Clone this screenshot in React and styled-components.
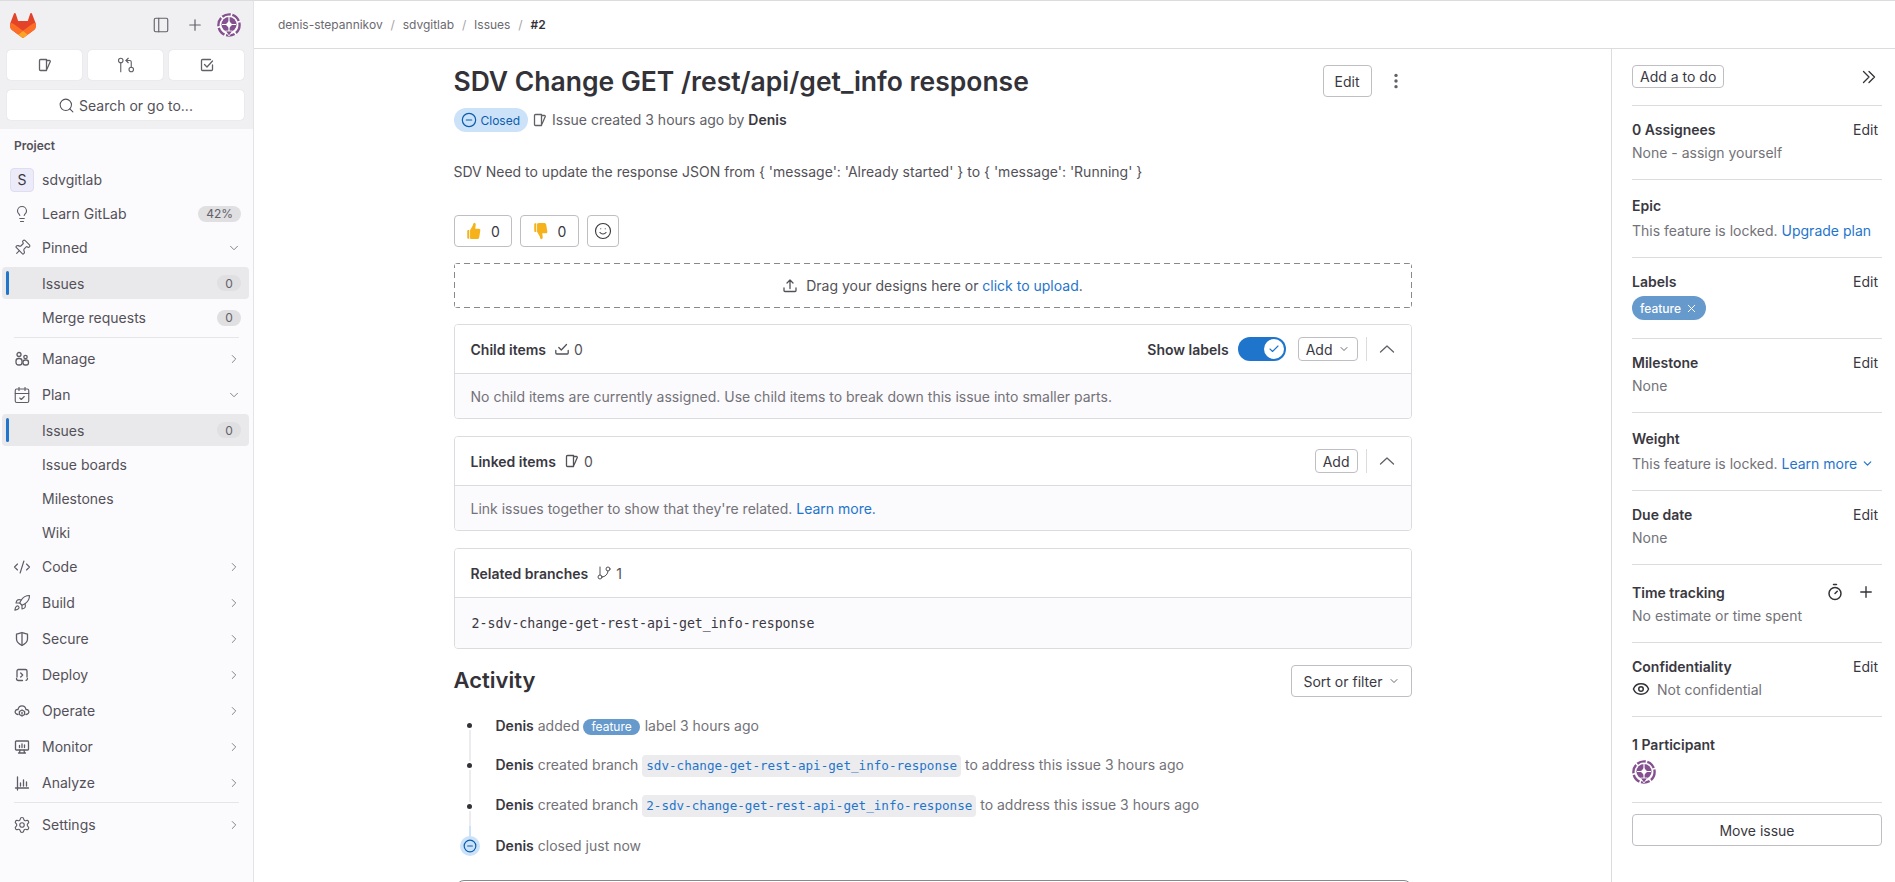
import React from "react";
import styled, { createGlobalStyle } from "styled-components";
import {
  PanelLeft, Plus, GitPullRequestArrow, Search, Lightbulb, Pin, ChevronDown, ChevronRight,
  CalendarCheck, CodeXml, Rocket, Settings, Timer, Eye, X, Smile, Check, GitBranch, CircleMinus,
} from "lucide-react";

const GlobalStyle = createGlobalStyle`
  html, body { margin: 0; padding: 0; height: 100%; overflow: hidden; background: #fff; }
  body { font-family: Inter, "Noto Sans", "Liberation Sans", sans-serif; font-size: 14px; color: #3a383f; }
  * { box-sizing: border-box; }
`;

/* hand drawn icons, 16x16 like the gitlab set */
const Svg = styled.svg.attrs((p) => ({
  viewBox: "0 0 16 16",
  fill: p.fill || "none",
  stroke: p.stroke || "currentColor",
  strokeWidth: 1.3,
  strokeLinecap: "round",
  strokeLinejoin: "round",
}))`
  width: ${(p) => p.$size || 16}px;
  height: ${(p) => p.$size || 16}px;
  flex-shrink: 0;
`;

const IssueIcon = ({ size }) => (
  <Svg $size={size}>
    <path d="M3.5 2.5h6v11h-6a1 1 0 0 1-1-1v-9a1 1 0 0 1 1-1z" />
    <path d="M9.5 3.5h3a.8.8 0 0 1 .8 1L10 12" />
  </Svg>
);
const TodoIcon = () => (
  <Svg>
    <path d="M13.5 8v4.5a1 1 0 0 1-1 1h-9a1 1 0 0 1-1-1v-9a1 1 0 0 1 1-1h8" />
    <path d="M5.5 7.5 8 10l5.5-6" />
  </Svg>
);
const ManageIcon = () => (
  <Svg>
    <circle cx="5" cy="3.5" r="2" />
    <circle cx="11.5" cy="6" r="1.7" />
    <rect x="2" y="7.5" width="6" height="6.5" rx="2.6" />
    <rect x="9" y="9" width="5.5" height="5" rx="2.2" />
  </Svg>
);
const ShieldIcon = () => (
  <Svg>
    <path d="M2.5 3.2C4.5 2.8 6 2.2 8 1.5c2 .7 3.5 1.3 5.5 1.7V8c0 3-2.5 5-5.5 6.5C5 13 2.5 11 2.5 8z" />
    <path d="M8 2v12" />
  </Svg>
);
const DeployIcon = () => (
  <Svg>
    <path d="M3 10V4a1.5 1.5 0 0 1 1.5-1.5h7A1.5 1.5 0 0 1 13 4v6" />
    <path d="M2.5 11.5c0 1.2 1 2 2 2h4M13.5 11.5c0 1-.6 1.6-1.4 1.9" />
    <path d="M6.7 6l2 2-2 2" />
  </Svg>
);
const OperateIcon = () => (
  <Svg>
    <path d="M4 11.5C2 11.2.8 9.8 1.2 8.4 1.6 7 2.8 6.4 4 6.5 4.5 4 6 2.8 8 2.8s3.5 1.2 4 3.7c1.2-.1 2.4.5 2.8 1.9.4 1.4-.8 2.8-2.8 3.1" />
    <path d="M8 7l2.6 1.5v3L8 13l-2.6-1.5v-3z" />
    <path d="M8 9.5v1.5" />
  </Svg>
);
const MonitorIcon = () => (
  <Svg>
    <rect x="1.5" y="2" width="13" height="9" rx=".8" />
    <path d="M5.5 8.5v-2M8 8.5v-3.5M10.5 8.5v-2.5M6 11l-.5 3M10 11l.5 3M4.5 14h7" />
  </Svg>
);
const AnalyzeIcon = () => (
  <Svg>
    <path d="M1.5 13h13M3.5 2v13M6.5 11V8M9.5 11V5M12.5 11V7" />
  </Svg>
);
const UploadIcon = () => (
  <Svg>
    <path d="M8 10.5V2M5 5l3-3 3 3M2 10v2.5a1 1 0 0 0 1 1h10a1 1 0 0 0 1-1V10" />
  </Svg>
);
const ChildIcon = () => (
  <Svg>
    <path d="M1.8 9.5V12a1 1 0 0 0 1 1h10.4a1 1 0 0 0 1-1V9.5" />
    <path d="M4.8 6.5 7.3 9 12.5 3.5" />
  </Svg>
);
const KebabIcon = () => (
  <Svg $size={18} stroke="none" fill="currentColor">
    <circle cx="8" cy="3" r="1.5" />
    <circle cx="8" cy="8" r="1.5" />
    <circle cx="8" cy="13" r="1.5" />
  </Svg>
);
const CollapseIcon = () => (
  <Svg>
    <path d="M1.5 11 8 5l6.5 6" />
  </Svg>
);
const DoubleChevron = () => (
  <Svg>
    <path d="M2.5 2.5 8 8l-5.5 5.5M8 2.5 13.5 8 8 13.5" />
  </Svg>
);
const ThumbIcon = ({ down }) => (
  <Svg $size={18} stroke="none" fill="#f5b21a" style={down ? { transform: "scaleY(-1)" } : undefined}>
    <path d="M8.2.6c1 0 1.5 1 1.3 2.2L9.1 6h3.2c1 0 1.5.8 1.3 1.6l-1 6.2c-.2.9-.8 1.4-1.8 1.4H6.4c-.9 0-1.4-.3-1.9-.8V7.3l2.3-4C7.3 1.8 7.6.6 8.2.6z" />
    <path d="M2.8 7.2h1v7.6h-1a.8.8 0 0 1-.8-.8V8a.8.8 0 0 1 .8-.8z" />
  </Svg>
);

const TanukiSvg = styled.svg`
  width: 26px;
  height: 25px;
`;
const GitlabLogo = () => (
  <TanukiSvg viewBox="0 0 25 24">
    <path d="m24.507 9.5-.034-.09L21.082.562a.896.896 0 0 0-1.694.091l-2.29 7.01H7.825L5.535.653a.898.898 0 0 0-1.694-.09L.451 9.411.416 9.5a6.297 6.297 0 0 0 2.09 7.278l.012.01.03.022 5.16 3.867 2.56 1.935 1.554 1.176a1.051 1.051 0 0 0 1.268 0l1.555-1.176 2.56-1.935 5.197-3.89.014-.01A6.297 6.297 0 0 0 24.507 9.5Z" fill="#E24329" />
    <path d="m24.507 9.5-.034-.09a11.44 11.44 0 0 0-4.56 2.051l-7.447 5.632 4.742 3.584 5.197-3.89.014-.01A6.297 6.297 0 0 0 24.507 9.5Z" fill="#FC6D26" />
    <path d="m7.707 20.677 2.56 1.935 1.555 1.176a1.051 1.051 0 0 0 1.268 0l1.555-1.176 2.56-1.935-4.743-3.584-4.755 3.584Z" fill="#FCA326" />
    <path d="M5.01 11.461a11.43 11.43 0 0 0-4.56-2.05L.416 9.5a6.297 6.297 0 0 0 2.09 7.278l.012.01.03.022 5.16 3.867 4.745-3.584-7.444-5.632Z" fill="#FC6D26" />
  </TanukiSvg>
);

const AvatarSvg = styled.svg`
  width: 24px;
  height: 24px;
  display: block;
`;
const Avatar = () => (
  <AvatarSvg viewBox="0 0 24 24">
    <circle cx="12" cy="12" r="12" fill="#fff" />
    <circle cx="12" cy="12" r="10.6" fill="none" stroke="#84508f" strokeWidth="2.4" strokeDasharray="9 1.6" />
    <circle cx="12" cy="11.5" r="7.6" fill="#84508f" />
    <path d="M12 4v15M5 11.5h14" stroke="#fff" strokeWidth="1.2" />
    <rect x="9.6" y="9.1" width="4.8" height="4.8" fill="#fff" transform="rotate(45 12 11.5)" />
    <path d="M8.5 18h7L12 23z" fill="#84508f" stroke="#fff" strokeWidth=".8" />
  </AvatarSvg>
);

/* page shell */
const Page = styled.div`
  display: flex;
  height: 100vh;
  border-top: 1px solid #dcdcde;
  overflow: hidden;
`;
const Sidebar = styled.nav`
  width: 254px;
  flex-shrink: 0;
  background: #fbfafd;
  border-right: 1px solid #e4e4e6;
  color: #535158;
`;
const SideHead = styled.div`
  height: 128px;
  padding: 12px 7px 0 7px;
  background: #f0f0f2;
`;
const LogoRow = styled.div`
  display: flex;
  align-items: center;
  height: 24px;
  padding-left: 3px;
  color: #626168;
`;
const LogoSpacer = styled.div`
  flex: 1;
`;
const HeadIcon = styled.span`
  display: flex;
  align-items: center;
  justify-content: center;
  width: 34px;
`;
const QuickRow = styled.div`
  display: grid;
  grid-template-columns: repeat(3, 75px);
  column-gap: 6px;
  margin-top: 13px;
`;
const QuickButton = styled.div`
  display: flex;
  align-items: center;
  justify-content: center;
  height: 30px;
  background: #fff;
  border-radius: 4px;
  box-shadow: 0 0 1px rgba(0, 0, 0, 0.2);
  color: #626168;
`;
const SearchBox = styled(QuickButton)`
  width: 237px;
  margin-top: 10px;
  gap: 4px;
  font-size: 14px;
  color: #535158;
`;
const SideTitle = styled.div`
  height: 34px;
  padding: 9px 0 0 14px;
  font-size: 12px;
  line-height: 16px;
  font-weight: 600;
`;
const NavRow = styled.div`
  display: flex;
  align-items: center;
  height: ${(p) => p.$h || 34}px;
  padding: 0 12px 0 14px;
  line-height: 20px;
  font-size: 14px;
`;
const NavIcon = styled.span`
  display: flex;
  justify-content: center;
  width: 16px;
  margin-right: 12px;
  color: #5e5d64;
  svg {
    flex-shrink: 0;
  }
`;
const NavLabel = styled.span`
  flex: 1;
`;
const SubLabel = styled(NavLabel)`
  padding-left: 28px;
`;
const ActiveRow = styled.div`
  position: relative;
  display: flex;
  align-items: center;
  height: 32px;
  margin: ${(p) => p.$margin || "2px 0"};
  margin-left: 2px;
  margin-right: 4px;
  padding: 0 8px 0 40px;
  background: #e9e8eb;
  border-radius: 4px;
  &::before {
    content: "";
    position: absolute;
    left: 4px;
    top: 4px;
    bottom: 4px;
    width: 3px;
    border-radius: 2px;
    background: #1f75cb;
  }
`;
const CountPill = styled.span`
  display: inline-flex;
  align-items: center;
  justify-content: center;
  min-width: 24px;
  height: 16px;
  padding: 0 8px;
  border-radius: 8px;
  background: #e0dfe2;
  color: #626168;
  font-size: 12px;
`;
const ProjectAvatar = styled.span`
  display: flex;
  align-items: center;
  justify-content: center;
  width: 24px;
  height: 24px;
  margin: 0 8px 0 -4px;
  border-radius: 4px;
  background: #ecebf9;
  border: 1px solid #dfddf0;
  font-size: 14px;
  color: #3a383f;
`;
const Separator = styled.div`
  height: 1px;
  margin: ${(p) => p.$margin || "2px 14px 3px"};
  background: #e6e6e9;
`;
const Tight = styled.div`
  margin-bottom: -1px;
`;

const Chev = ({ open }) =>
  open ? <ChevronDown size={14} strokeWidth={1.5} color="#737278" /> : <ChevronRight size={14} strokeWidth={1.5} color="#737278" />;

/* right of the sidebar */
const Body = styled.div`
  flex: 1;
  min-width: 0;
  display: flex;
  flex-direction: column;
`;
const TopBar = styled.div`
  height: 48px;
  flex-shrink: 0;
  display: flex;
  align-items: center;
  padding-left: 24px;
  border-bottom: 1px solid #dcdcde;
  font-size: 12px;
  color: #6b6a70;
`;
const Slash = styled.span`
  width: 20px;
  text-align: center;
  color: #a4a3a8;
`;
const Crumb = styled.span`
  font-weight: ${(p) => (p.$current ? 600 : 400)};
  color: ${(p) => (p.$current ? "#333238" : "inherit")};
`;
const Columns = styled.div`
  flex: 1;
  min-height: 0;
  display: flex;
`;
const Main = styled.main`
  flex: 1;
  min-width: 0;
  overflow: hidden;
`;
const Content = styled.div`
  width: 958px;
  margin: 0 auto;
  padding-top: 16px;
`;
const TitleRow = styled.div`
  display: flex;
  align-items: center;
  height: 32px;
`;
const Title = styled.h1`
  flex: 1;
  margin: 0;
  font-size: 26.5px;
  line-height: 32px;
  font-weight: 600;
  color: #333238;
`;
const Button = styled.div`
  display: inline-flex;
  align-items: center;
  justify-content: center;
  gap: ${(p) => p.$gap || 0}px;
  width: ${(p) => (p.$w ? p.$w + "px" : "auto")};
  height: ${(p) => p.$h || 32}px;
  padding: 0 ${(p) => p.$px ?? 12}px;
  border: 1px solid #bfbfc3;
  border-radius: 4px;
  background: #fff;
  color: #3a383f;
  font-size: 14px;
  white-space: nowrap;
`;
const Kebab = styled.span`
  display: flex;
  justify-content: center;
  width: 48px;
  margin-right: -8px;
  color: #626168;
`;
const MetaRow = styled.div`
  display: flex;
  align-items: center;
  height: 24px;
  margin-top: 11px;
  gap: 4px;
  color: #626168;
`;
const MetaText = styled.span`
  margin-top: -1px;
`;
const StatusBadge = styled.span`
  display: inline-flex;
  align-items: center;
  gap: 4px;
  height: 24px;
  padding: 0 8px 0 7px;
  border-radius: 12px;
  background: #cbe2f9;
  color: #0b5cad;
  font-size: 12px;
`;
const Strong = styled.strong`
  font-weight: 600;
  color: #3a383f;
`;
const Description = styled.p`
  margin: 30px 0 0;
  line-height: 20px;
  color: #535158;
`;
const Awards = styled.div`
  display: flex;
  gap: 8px;
  margin-top: 33px;
`;
const dash = "#89888d 0 6px, transparent 6px 10px";
const DropZone = styled.div`
  display: flex;
  align-items: center;
  justify-content: center;
  gap: 8px;
  height: 45px;
  margin-top: 16px;
  border-radius: 4px;
  color: #535158;
  background-image: repeating-linear-gradient(90deg, ${dash}), repeating-linear-gradient(90deg, ${dash}),
    repeating-linear-gradient(0deg, ${dash}), repeating-linear-gradient(0deg, ${dash});
  background-size: 100% 1px, 100% 1px, 1px 100%, 1px 100%;
  background-position: 0 0, 0 100%, 0 0, 100% 0;
  background-repeat: no-repeat;
`;
const Link = styled.a`
  color: #1f75cb;
`;
const Card = styled.section`
  margin-top: ${(p) => p.$mt || 17}px;
  border: 1px solid #dcdcde;
  border-radius: 4px;
  overflow: hidden;
`;
const CardHead = styled.header`
  display: flex;
  align-items: center;
  height: 49px;
  padding: 0 8px 0 16px;
  border-bottom: 1px solid #dcdcde;
  background: #fff;
`;
const CardTitle = styled.span`
  font-weight: 600;
  color: #3a383f;
`;
const CardCount = styled.span`
  display: inline-flex;
  align-items: center;
  gap: 4px;
  margin-left: 8px;
  color: #535158;
`;
const CardSpacer = styled.div`
  flex: 1;
`;
const CardBody = styled.div`
  display: flex;
  align-items: center;
  height: ${(p) => p.$h || 44}px;
  padding: 0 16px;
  background: #fbfafd;
  color: #737278;
`;
const BranchText = styled.code`
  font-family: "DejaVu Sans Mono", "Liberation Mono", monospace;
  font-size: 13.25px;
  margin-left: 1px;
  color: #3a383f;
`;
const Toggle = styled.span`
  position: relative;
  width: 48px;
  height: 24px;
  margin: 0 12px 0 9px;
  border-radius: 12px;
  background: #1f75cb;
`;
const ToggleKnob = styled.span`
  position: absolute;
  right: 2px;
  top: 2px;
  display: flex;
  align-items: center;
  justify-content: center;
  width: 20px;
  height: 20px;
  border-radius: 50%;
  background: #fff;
  color: #1f75cb;
`;
const VLine = styled.span`
  width: 1px;
  height: 24px;
  margin: 0 12px 0 8px;
  background: #dcdcde;
`;
const Collapse = styled.span`
  display: flex;
  justify-content: center;
  width: 16px;
  margin-right: 8px;
  color: #626168;
`;
const ActivityHead = styled.div`
  display: flex;
  align-items: center;
  justify-content: space-between;
  height: 32px;
  margin-top: 16px;
`;
const ActivityTitle = styled.h2`
  margin: -2px 0 0;
  font-size: 22px;
  line-height: 28px;
  font-weight: 600;
  color: #333238;
`;
const Timeline = styled.div`
  position: relative;
  margin-top: 9px;
  &::before {
    content: "";
    position: absolute;
    left: 15px;
    top: 20px;
    height: 120px;
    width: 2px;
    background: linear-gradient(#ececef 0 100px, #cbe2f9 100px);
  }
`;
const TimelineRow = styled.div`
  position: relative;
  display: flex;
  align-items: center;
  height: ${(p) => p.$h || 40}px;
  color: #737278;
  white-space: nowrap;
`;
const DotCell = styled.span`
  display: flex;
  align-items: center;
  justify-content: center;
  width: 32px;
  margin-right: 10px;
`;
const Dot = styled.span`
  width: 5px;
  height: 5px;
  border-radius: 50%;
  background: #333238;
  box-shadow: 0 0 0 2px #fff;
`;
const CloseDot = styled.span`
  display: flex;
  align-items: center;
  justify-content: center;
  width: 20px;
  height: 20px;
  border-radius: 50%;
  background: #cbe2f9;
  color: #0b5cad;
`;
const InlineLabel = styled.span`
  display: inline-block;
  height: 16px;
  line-height: 16px;
  margin: 0 1px 0 0;
  padding: 0 8px;
  border-radius: 8px;
  background: #6699cc;
  color: #fff;
  font-size: 12px;
`;
const BranchChip = styled.code`
  display: inline-block;
  height: 22px;
  line-height: 22px;
  margin: -1px 0;
  padding: 0 4px;
  border-radius: 4px;
  background: #ececef;
  color: #1f75cb;
  font-family: "DejaVu Sans Mono", "Liberation Mono", monospace;
  font-size: 12.6px;
`;
const CommentBox = styled.div`
  height: 120px;
  margin: 15px 0 0 2px;
  border: 1px solid #89888d;
  border-radius: 8px;
`;

/* issue sidebar */
const Aside = styled.aside`
  width: 284px;
  flex-shrink: 0;
  padding: 0 13px 0 20px;
  border-left: 1px solid #dcdcde;
`;
const TodoRow = styled.div`
  display: flex;
  justify-content: space-between;
  height: 57px;
  padding: 16px 5px 0 0;
  align-items: flex-start;
  border-bottom: 1px solid #dcdcde;
  color: #333238;
`;
const TodoChevrons = styled.span`
  display: flex;
  padding-top: 4px;
`;
const Block = styled.div`
  padding: ${(p) => (p.$pt || 14) - 1}px 0 ${(p) => (p.$pb || 16) + 1}px;
  border-bottom: 1px solid #dcdcde;
`;
const BlockHead = styled.div`
  display: flex;
  align-items: center;
  justify-content: space-between;
  height: 20px;
  padding-right: 4px;
  margin-bottom: ${(p) => p.$gap || 3}px;
`;
const BlockTitle = styled.span`
  font-weight: 600;
  color: #3a383f;
`;
const EditLink = styled.span`
  color: #3a383f;
`;
const BlockValue = styled.div`
  display: flex;
  align-items: center;
  height: 20px;
  color: #737278;
`;
const LabelPill = styled.span`
  display: inline-flex;
  align-items: center;
  gap: 4px;
  height: 24px;
  padding: 0 8px;
  border-radius: 12px;
  background: #6699cc;
  color: #fff;
  font-size: 12px;
  font-weight: 500;
`;
const TrackIcons = styled.span`
  display: flex;
  align-items: center;
  gap: 13px;
  margin-right: 3px;
  color: #333238;
`;
const EyeWrap = styled.span`
  display: flex;
  margin-right: 7px;
  color: #333238;
`;
const MoveButton = styled(Button)`
  width: 100%;
  margin-top: 11px;
`;

const navBottom = [
  ["Code", <CodeXml size={18} strokeWidth={1.5} />],
  ["Build", <Rocket size={18} strokeWidth={1.5} />],
  ["Secure", <ShieldIcon />],
  ["Deploy", <DeployIcon />],
  ["Operate", <OperateIcon />],
  ["Monitor", <MonitorIcon />],
  ["Analyze", <AnalyzeIcon />],
];

const NavItem = ({ icon, label, open }) => (
  <NavRow $h={36}>
    <NavIcon>{icon}</NavIcon>
    <NavLabel>{label}</NavLabel>
    <Chev open={open} />
  </NavRow>
);

const SideBlock = ({ title, action = "Edit", pt, pb, gap, children }) => (
  <Block $pt={pt} $pb={pb}>
    <BlockHead $gap={gap}>
      <BlockTitle>{title}</BlockTitle>
      {action && <EditLink>{action}</EditLink>}
    </BlockHead>
    {children}
  </Block>
);

export default function App() {
  return (
    <>
      <GlobalStyle />
      <Page>
        <Sidebar>
          <SideHead>
            <LogoRow>
              <GitlabLogo />
              <LogoSpacer />
              <HeadIcon><PanelLeft size={18} strokeWidth={1.5} /></HeadIcon>
              <HeadIcon><Plus size={18} strokeWidth={1.6} /></HeadIcon>
              <HeadIcon><Avatar /></HeadIcon>
            </LogoRow>
            <QuickRow>
              <QuickButton><IssueIcon /></QuickButton>
              <QuickButton><GitPullRequestArrow size={18} strokeWidth={1.5} /></QuickButton>
              <QuickButton><TodoIcon /></QuickButton>
            </QuickRow>
            <SearchBox><Search size={17} strokeWidth={1.5} /> Search or go to...</SearchBox>
          </SideHead>

          <SideTitle>Project</SideTitle>
          <NavRow>
            <ProjectAvatar>S</ProjectAvatar>
            <NavLabel>sdvgitlab</NavLabel>
          </NavRow>
          <NavRow>
            <NavIcon><Lightbulb size={18} strokeWidth={1.5} /></NavIcon>
            <NavLabel>Learn GitLab</NavLabel>
            <CountPill>42%</CountPill>
          </NavRow>
          <NavRow>
            <NavIcon><Pin size={18} strokeWidth={1.5} style={{ transform: "rotate(45deg)" }} /></NavIcon>
            <NavLabel>Pinned</NavLabel>
            <Chev open />
          </NavRow>
          <ActiveRow>
            <NavLabel>Issues</NavLabel>
            <CountPill>0</CountPill>
          </ActiveRow>
          <NavRow>
            <SubLabel>Merge requests</SubLabel>
            <CountPill>0</CountPill>
          </NavRow>
          <Separator />
          <NavItem label="Manage" icon={<ManageIcon />} />
          <NavItem label="Plan" icon={<CalendarCheck size={18} strokeWidth={1.5} />} open />
          <ActiveRow $margin="1px 0 2px">
            <NavLabel>Issues</NavLabel>
            <CountPill>0</CountPill>
          </ActiveRow>
          <Tight>
            <NavRow><SubLabel>Issue boards</SubLabel></NavRow>
            <NavRow><SubLabel>Milestones</SubLabel></NavRow>
            <NavRow><SubLabel>Wiki</SubLabel></NavRow>
          </Tight>
          {navBottom.map(([label, icon]) => <NavItem key={label} label={label} icon={icon} />)}
          <Separator $margin="1px 14px 4px" />
          <NavItem label="Settings" icon={<Settings size={18} strokeWidth={1.5} />} />
        </Sidebar>

        <Body>
          <TopBar>
            <Crumb>denis-stepannikov</Crumb>
            <Slash>/</Slash>
            <Crumb>sdvgitlab</Crumb>
            <Slash>/</Slash>
            <Crumb>Issues</Crumb>
            <Slash>/</Slash>
            <Crumb $current>#2</Crumb>
          </TopBar>

          <Columns>
            <Main>
              <Content>
                <TitleRow>
                  <Title>SDV Change GET /rest/api/get_info response</Title>
                  <Button $w={49}>Edit</Button>
                  <Kebab><KebabIcon /></Kebab>
                </TitleRow>
                <MetaRow>
                  <StatusBadge><CircleMinus size={16} strokeWidth={1.8} />Closed</StatusBadge>
                  <IssueIcon />
                  <MetaText>Issue created 3 hours ago by <Strong>Denis</Strong></MetaText>
                </MetaRow>
                <Description>
                  SDV Need to update the response JSON from {"{"} 'message': 'Already started' {"}"} to {"{"} 'message': 'Running' {"}"}
                </Description>
                <Awards>
                  <Button $w={58} $px={0} $gap={8}><ThumbIcon /> 0</Button>
                  <Button $w={59} $px={0} $gap={8}><ThumbIcon down /> 0</Button>
                  <Button $w={32} $px={0}><Smile size={18} strokeWidth={1.5} /></Button>
                </Awards>
                <DropZone>
                  <UploadIcon />
                  <span>Drag your designs here or <Link>click to upload</Link>.</span>
                </DropZone>

                <Card $mt={16}>
                  <CardHead>
                    <CardTitle>Child items</CardTitle>
                    <CardCount><ChildIcon />0</CardCount>
                    <CardSpacer />
                    <CardTitle>Show labels</CardTitle>
                    <Toggle><ToggleKnob><Check size={12} strokeWidth={2.2} /></ToggleKnob></Toggle>
                    <Button $h={24} $px={7} $gap={5}>Add <ChevronDown size={12} strokeWidth={1.5} /></Button>
                    <VLine />
                    <Collapse><CollapseIcon /></Collapse>
                  </CardHead>
                  <CardBody>No child items are currently assigned. Use child items to break down this issue into smaller parts.</CardBody>
                </Card>

                <Card>
                  <CardHead>
                    <CardTitle>Linked items</CardTitle>
                    <CardCount><IssueIcon />0</CardCount>
                    <CardSpacer />
                    <Button $h={24} $px={7}>Add</Button>
                    <VLine />
                    <Collapse><CollapseIcon /></Collapse>
                  </CardHead>
                  <CardBody>Link issues together to show that they're related.&nbsp;<Link>Learn more.</Link></CardBody>
                </Card>

                <Card>
                  <CardHead>
                    <CardTitle>Related branches</CardTitle>
                    <CardCount><GitBranch size={16} strokeWidth={1.5} />1</CardCount>
                  </CardHead>
                  <CardBody $h={50}><BranchText>2-sdv-change-get-rest-api-get_info-response</BranchText></CardBody>
                </Card>

                <ActivityHead>
                  <ActivityTitle>Activity</ActivityTitle>
                  <Button $px={11} $gap={5}>Sort or filter <ChevronDown size={12} strokeWidth={1.5} /></Button>
                </ActivityHead>
                <Timeline>
                  <TimelineRow $h={39}>
                    <DotCell><Dot /></DotCell>
                    <span><Strong>Denis</Strong> added <InlineLabel>feature</InlineLabel> label 3 hours ago</span>
                  </TimelineRow>
                  <TimelineRow $h={41}>
                    <DotCell><Dot /></DotCell>
                    <span><Strong>Denis</Strong> created branch <BranchChip>sdv-change-get-rest-api-get_info-response</BranchChip> to address this issue 3 hours ago</span>
                  </TimelineRow>
                  <TimelineRow>
                    <DotCell><Dot /></DotCell>
                    <span><Strong>Denis</Strong> created branch <BranchChip>2-sdv-change-get-rest-api-get_info-response</BranchChip> to address this issue 3 hours ago</span>
                  </TimelineRow>
                  <TimelineRow $h={39}>
                    <DotCell><CloseDot><CircleMinus size={14} strokeWidth={2} /></CloseDot></DotCell>
                    <span><Strong>Denis</Strong> closed just now</span>
                  </TimelineRow>
                </Timeline>
                <CommentBox />
              </Content>
            </Main>

            <Aside>
              <TodoRow>
                <Button $h={23} $px={7}>Add a to do</Button>
                <TodoChevrons><DoubleChevron /></TodoChevrons>
              </TodoRow>
              <SideBlock title="0 Assignees">
                <BlockValue>None - assign yourself</BlockValue>
              </SideBlock>
              <SideBlock title="Epic" action={null} pt={16} gap={5}>
                <BlockValue>This feature is locked.&nbsp;<Link>Upgrade plan</Link></BlockValue>
              </SideBlock>
              <SideBlock title="Labels" gap={5} pb={17}>
                <LabelPill>feature <X size={13} strokeWidth={1.8} /></LabelPill>
              </SideBlock>
              <SideBlock title="Milestone">
                <BlockValue>None</BlockValue>
              </SideBlock>
              <SideBlock title="Weight" action={null} pt={16} gap={5}>
                <BlockValue>
                  This feature is locked.&nbsp;<Link>Learn more</Link>&nbsp;
                  <ChevronDown size={13} strokeWidth={2.2} color="#1f75cb" />
                </BlockValue>
              </SideBlock>
              <SideBlock title="Due date">
                <BlockValue>None</BlockValue>
              </SideBlock>
              <SideBlock
                title="Time tracking"
                pt={18}
                action={<TrackIcons><Timer size={18} strokeWidth={2} /><Plus size={18} strokeWidth={1.8} /></TrackIcons>}
              >
                <BlockValue>No estimate or time spent</BlockValue>
              </SideBlock>
              <SideBlock title="Confidentiality">
                <BlockValue><EyeWrap><Eye size={18} strokeWidth={2} /></EyeWrap>Not confidential</BlockValue>
              </SideBlock>
              <SideBlock title="1 Participant" action={null} pt={18} pb={17} gap={6}>
                <Avatar />
              </SideBlock>
              <MoveButton>Move issue</MoveButton>
            </Aside>
          </Columns>
        </Body>
      </Page>
    </>
  );
}
